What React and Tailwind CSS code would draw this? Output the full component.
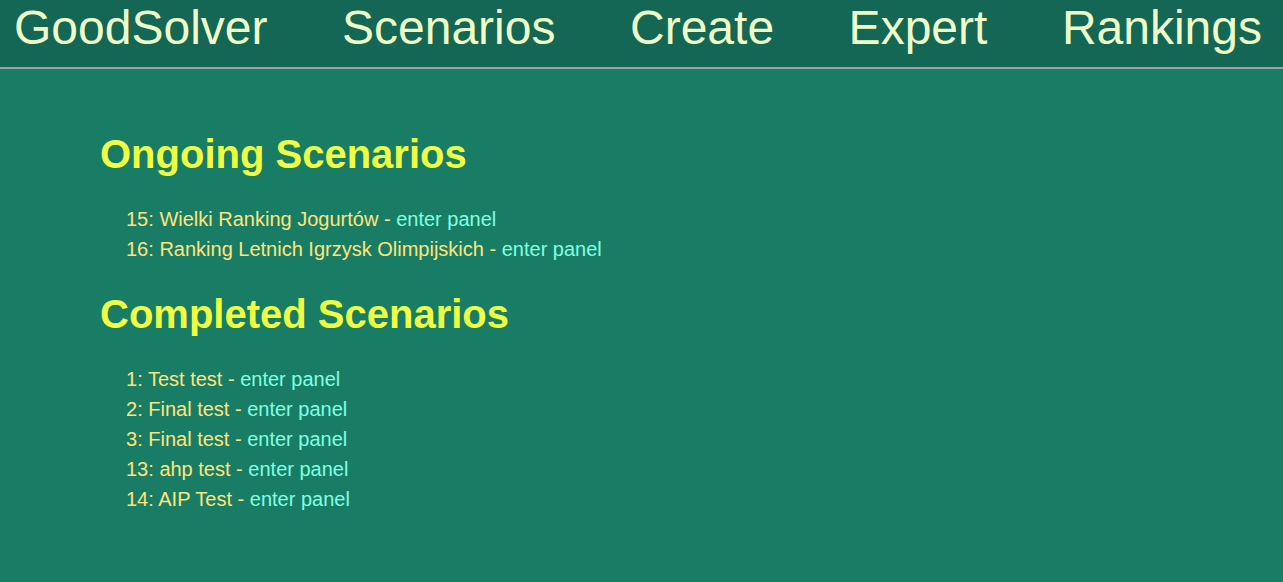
export default function App() {
  const ongoing = [
    { id: 15, name: "Wielki Ranking Jogurtów" },
    { id: 16, name: "Ranking Letnich Igrzysk Olimpijskich" },
  ];
  const completed = [
    { id: 1, name: "Test test" },
    { id: 2, name: "Final test" },
    { id: 3, name: "Final test" },
    { id: 13, name: "ahp test" },
    { id: 14, name: "AIP Test" },
  ];
  const font = { fontFamily: '"Liberation Sans", Arial, sans-serif' };
  const List = ({ items }) => (
    <ul className="mt-[27px] pl-[26px] list-none">
      {items.map((it, i) => (
        <li key={i} className="text-[20px] leading-[30px] text-[#ffe47c]">
          {it.id}: {it.name} - <a className="text-[#80ffe0]" href="#">enter panel</a>
        </li>
      ))}
    </ul>
  );
  return (
    <div className="min-h-screen bg-[#197d66]" style={font}>
      <nav className="h-[69px] bg-[#146655] border-b-2 border-[#a0a0a0] flex justify-between items-start pl-[14px] pr-[21px]">
        {["GoodSolver", "Scenarios", "Create", "Expert", "Rankings"].map((t) => (
          <a key={t} href="#" className="text-[48px] leading-[55px] text-[#eeffc8]">
            {t}
          </a>
        ))}
      </nav>
      <main className="pl-[100px] pt-[62px]">
        <h1 className="text-[40px] leading-[46px] font-bold text-[#eeff44]">Ongoing Scenarios</h1>
        <List items={ongoing} />
        <h1 className="mt-[27px] text-[40px] leading-[46px] font-bold text-[#eeff44]">Completed Scenarios</h1>
        <List items={completed} />
      </main>
    </div>
  );
}
